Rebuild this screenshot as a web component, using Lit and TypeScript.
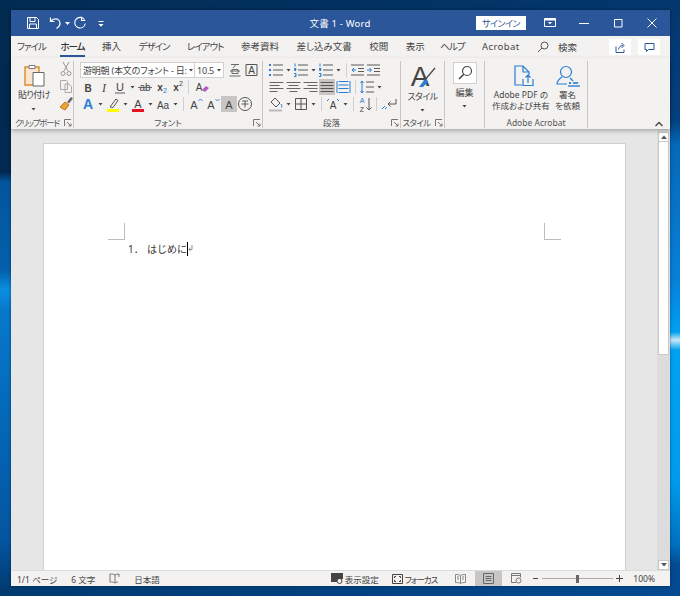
import { LitElement, html, svg, css } from "lit";
import { customElement } from "lit/decorators.js";

const GREY = "#5b5b5b";
const BLUE = "#2b7cd3";

// icon drawn on a 16 unit box, centred in a cell of width w
const ic = (w: number, body: unknown, h = 16) => html`<svg
  width=${w}
  height=${h}
  viewBox="${(16 - w) / 2} ${(16 - h) / 2} ${w} ${h}"
  fill="none"
  stroke=${GREY}
  stroke-width="1"
>${body}</svg>`;

const caret = (w = 9) => ic(w, svg`<path d="M6 7h4l-2 2.5z" fill="#444" stroke="none"/>`);
const sep = () => html`<span class="vsep"></span>`;
const letter = (t: string, cls: string, x = 8, y = 12.5) => svg`<text x=${x} y=${y} class=${cls} text-anchor="middle" stroke="none">${t}</text>`;
const launcher = () => html`<svg class="launch" width="8" height="8" viewBox="0 0 8 8" fill="none" stroke="#777"><path d="M.5 7V.5H7M3 3l4 4M7 4.5V7H4.5"/></svg>`;

const lines = (ys: number[], x1: number[], x2: number[], color = GREY) =>
  ys.map((y, i) => svg`<path d="M${x1[i]} ${y}H${x2[i]}" stroke=${color}/>`);

const alignIcon = (x1: number[], x2: number[]) =>
  ic(17, lines([3.5, 6.5, 9.5, 12.5], x1, x2, "#666"));

const listIcon = (kind: string) => svg`
  ${kind === "bul"
    ? svg`<rect x="1" y="2" width="2" height="2" fill=${BLUE} stroke="none"/><rect x="1" y="7" width="2" height="2" fill=${BLUE} stroke="none"/><rect x="1" y="12" width="2" height="2" fill=${BLUE} stroke="none"/>`
    : svg`<path d="M2 1.5v3M1 6.5h2v1H1.5v1H3M1 11.5h2v3H1M2 13h1" stroke=${BLUE}/>`}
  <path d="M5 3h10M5 8h10M5 13h10"/>`;

const ICONS = {
  save: html`<svg width="14" height="14" viewBox="0 0 14 14" fill="none" stroke="#fff"><path d="M1.5 1.5h9l2 2v9h-11zM4 1.5v4h5v-4M3.5 12.5v-4.500h7v4.500"/></svg>`,
  undo: html`<svg width="13" height="14" viewBox="0 0 13 14" fill="none" stroke="#fff" stroke-width="1.200"><path d="M1.500 1.500v4h4M1.800 5.300C3 3.500 4.500 2.800 6.500 2.800c2.500 0 4.500 2 4.500 4.500 0 2.500-1.500 4-3.500 5.200"/></svg>`,
  redo: html`<svg width="14" height="14" viewBox="0 0 14 14" fill="none" stroke="#fff" stroke-width="1.100"><path d="M8.500 .8v3.700h3.700M11.500 3.800A5.300 5.300 0 1 0 12.300 7.500"/></svg>`,
  qat: html`<svg width="6" height="7" viewBox="0 0 6 7" fill="#fff"><path d="M.5 1h5v1h-5zM.5 4h5L3 6.800z"/></svg>`,
  ribbon: html`<svg width="12" height="10" viewBox="0 0 12 10" fill="none" stroke="#fff"><path d="M.5.5h11v8H.5z"/><path d="M.5 1.500h11" stroke-width="2"/><path d="M4 4h4L6 6.500z" fill="#fff" stroke="none"/></svg>`,
  min: html`<svg width="10" height="10" viewBox="0 0 10 10" stroke="#fff"><path d="M0 5.500h10"/></svg>`,
  max: html`<svg width="10" height="10" viewBox="0 0 10 10" fill="none" stroke="#fff"><path d="M1.500 1.500h7.500v7.500h-7.500z"/></svg>`,
  close: html`<svg width="10" height="10" viewBox="0 0 10 10" stroke="#fff"><path d="M.5.500l9 9M9.500.5l-9 9"/></svg>`,
  search: html`<svg width="12" height="12" viewBox="0 0 12 12" fill="none" stroke="#555"><circle cx="7.500" cy="4.500" r="3.500"/><path d="M5 7l-4 4"/></svg>`,
  share: html`<svg width="11" height="11" viewBox="0 0 11 11" fill="none" stroke="#2b579a"><path d="M1 4.500v6h8v-3M3.500 7.500C4 5 5.500 3.500 8 3.500M6.500 1l2.500 2.500-2.500 2.500"/></svg>`,
  comment: html`<svg width="11" height="11" viewBox="0 0 11 11" fill="none" stroke="#2b579a"><path d="M1 1.500h9v6H4.500L2.500 9.500v-2H1z"/></svg>`,
};

@customElement("app-root")
export class AppRoot extends LitElement {
  static styles = css`
    :host {
      display: block;
      width: 680px;
      height: 596px;
      box-sizing: border-box;
      padding: 10px 10px 10px 11px;
      overflow: hidden;
      /* desktop wallpaper, only the edges show round the window */
      background:
        linear-gradient(90deg, #022b52, #03386f) top / 100% 10px no-repeat,
        linear-gradient(90deg, #023a70, #044a90) bottom / 100% 10px no-repeat,
        linear-gradient(180deg, #02294f 172px, #03559c 182px, #0460ac 270px, #0a8ee0 290px, #0878cc 310px, #0468b8 420px, #0555a0 540px, #023a70 590px) left / 11px 100% no-repeat,
        linear-gradient(180deg, #04366e 0, #04407e 120px, #0668b8 145px, #0880d8 280px, #00a0f0 332px, #c8e8f8 340px, #00a0f0 350px, #009cec 480px, #0070c0 545px, #044a90 565px) right / 10px 100% no-repeat;
      font-family: "Noto Sans", "Noto Sans CJK JP", sans-serif;
      font-feature-settings: "palt";
      font-size: 9.500px;
      color: #444;
    }
    svg { display: block; flex: none; }
    svg text { font-family: "Liberation Sans", sans-serif; fill: #444; }
    svg .b { font-size: 10px; font-weight: 700; }
    svg .i { font-size: 12px; font-style: italic; font-family: "Liberation Serif", serif; }
    svg .n { font-size: 11px; }
    svg .s { font-size: 10px; }
    svg .big { font-size: 14px; font-weight: 700; fill: #2b7cd3; }
    svg .tiny { font-size: 7px; }
    svg .blue { fill: #2b7cd3; }
    svg .stylea { font-size: 28px; }

    .window {
      width: 659px;
      height: 576px;
      display: flex;
      flex-direction: column;
      background: #e6e6e6;
      box-shadow: 0 0 3px rgba(0, 0, 0, .4);
    }

    /* title bar */
    .title {
      height: 26px;
      flex: none;
      background: #2b579a;
      color: #fff;
      display: grid;
      grid-template-columns: 1fr auto 1fr;
      align-items: center;
    }
    .qat, .controls { display: flex; align-items: center; }
    .qat { padding-left: 15px; }
    .qat .undo { margin-left: 9px; }
    .qat .ucaret { margin: 0 0 0 3px; }
    .qat .redo { margin-left: 3px; }
    .qat .custom { margin-left: 11px; }
    .doc-name { font-size: 9.500px; letter-spacing: .2px; padding-right: 1px; }
    .controls { justify-content: flex-end; padding-right: 13px; }
    .signin {
      width: 50px;
      height: 14px;
      background: #fff;
      color: #2b579a;
      font-size: 9px;
      letter-spacing: -.5px;
      display: flex;
      align-items: center;
      justify-content: center;
      margin-right: 18px;
    }
    .controls .ribbon { margin-right: 23px; }
    .controls .min { margin-right: 24px; }
    .controls .max { margin-right: 24px; }

    /* tabs */
    .tabs {
      height: 22px;
      flex: none;
      background: #f3f2f1;
      display: flex;
      align-items: center;
      gap: 17.500px;
      padding: 0 10px 0 6px;
      font-size: 9.500px;
    }
    .tab { position: relative; line-height: 22px; white-space: nowrap; }
    .tab:first-child { margin-right: -3px; }
    .tab.kana { letter-spacing: -1px; }
    .tab.latin { letter-spacing: .4px; }
    .tab.tight { margin-right: -2px; }
    .tab.on { color: #333; font-weight: 500; }
    .tab.on::after {
      content: "";
      position: absolute;
      left: 0;
      right: 0;
      bottom: 1px;
      height: 2px;
      background: #2b579a;
    }
    .find { display: flex; align-items: center; gap: 9px; white-space: nowrap; }
    .tabs .right { margin-left: auto; display: flex; gap: 7px; }
    .tabbtn {
      width: 22px;
      height: 16px;
      background: #fff;
      display: flex;
      align-items: center;
      justify-content: center;
    }

    /* ribbon */
    .ribbon-bar {
      height: 71px;
      flex: none;
      box-sizing: border-box;
      background: #f3f2f1;
      display: flex;
      padding: 3px 0 1px;
      box-shadow: 0 2px 4px rgba(0, 0, 0, .25);
      position: relative;
      z-index: 1;
      font-size: 9px;
    }
    .group {
      box-sizing: border-box;
      border-right: 1px solid #c8c6c4;
      display: flex;
      flex-direction: column;
      position: relative;
    }
    .g-clip { width: 63px; }
    .g-font { width: 189px; }
    .g-para { width: 138px; }
    .g-style { width: 44px; }
    .g-edit { width: 40px; }
    .g-acro { width: 103px; }
    .body { flex: 1; min-height: 0; }
    .label {
      height: 11px;
      line-height: 11px;
      text-align: center;
      font-size: 8.500px;
      color: #555;
      white-space: nowrap;
    }
    .label.kana { letter-spacing: -.6px; }
    .launch { position: absolute; right: 1px; bottom: 1px; }
    .g-clip .label { padding-right: 10px; letter-spacing: -1.200px; }
    .g-style .label { padding-right: 12px; }

    .g-clip .body { display: flex; padding: 0 0 0 7px; }
    .paste { width: 35px; display: flex; flex-direction: column; align-items: center; padding-top: 2px; }
    .paste span { margin-top: 2px; line-height: 12px; letter-spacing: -.6px; white-space: nowrap; }
    .tools { display: flex; flex-direction: column; gap: 1px; margin-left: 8px; }

    .rows { display: flex; flex-direction: column; gap: 1px; }
    .g-font .body { padding: 1px 0 0 6px; }
    .g-para .body { padding: 1px 0 0 5px; }
    .row { display: flex; align-items: center; height: 16px; }
    .vsep { width: 1px; height: 14px; background: #d2d0ce; margin: 0 3px; flex: none; }
    .fontbox {
      box-sizing: border-box;
      width: 115px;
      height: 16px;
      background: #fff;
      border: 1px solid #d2d0ce;
      display: flex;
      align-items: center;
      font-size: 9px;
      padding-left: 2px;
      white-space: nowrap;
      justify-content: space-between;
    }
    .fontbox span { letter-spacing: -.2px; }
    .sizebox { width: 30px; margin-left: -1px; margin-right: 3px; }
    .on-grey { background: #c8c6c4; }

    .large {
      display: flex;
      flex-direction: column;
      align-items: center;
      padding-top: 1px;
      text-align: center;
      line-height: 11px;
    }
    .large .kana { letter-spacing: -.5px; white-space: nowrap; }
    .editbtn {
      width: 24px;
      height: 22px;
      box-sizing: border-box;
      background: #fff;
      border: 1px solid #d2d0ce;
      display: flex;
      align-items: center;
      justify-content: center;
      margin-bottom: 3px;
    }
    .g-acro .body { display: flex; justify-content: space-between; padding: 4px 7px 0 7px; font-size: 8.500px; }
    .acro { display: flex; flex-direction: column; align-items: center; line-height: 11px; text-align: center; gap: 2px; white-space: nowrap; }
    .acro .up { margin-left: 6px; }
    .chev { position: absolute; left: 644px; bottom: 2px; }

    /* document */
    .work { flex: 1; min-height: 0; display: flex; overflow: hidden; }
    .canvas { flex: 1; padding: 14px 0 0 32px; overflow: hidden; }
    .page {
      box-sizing: border-box;
      width: 583px;
      height: 600px;
      background: #fff;
      border: 1px solid #d0d0d0;
      padding: 79px 64px 0;
    }
    .marks { display: flex; justify-content: space-between; }
    .mark { width: 17px; height: 17px; box-sizing: border-box; border-bottom: 1px solid #bdbdbd; }
    .mark.l { border-right: 1px solid #bdbdbd; }
    .mark.r { border-left: 1px solid #bdbdbd; }
    .line {
      display: flex;
      align-items: center;
      height: 13px;
      margin: 2px 0 0 20px;
      font-size: 10px;
      color: #333;
      font-feature-settings: normal;
    }
    .line .num { width: 19px; }
    .cursor { width: 1px; height: 14px; background: #000; }

    .scroll {
      width: 13px;
      background: #dcdcdc;
      display: flex;
      flex-direction: column;
      flex: none;
      box-sizing: border-box;
      padding: 3px 1px 0 1px;
    }
    .sbtn { height: 10px; background: #fff; border: 1px solid #c8c8c8; box-sizing: border-box; display: flex; align-items: center; justify-content: center; flex: none; }
    .thumb { height: 213px; background: #fff; border: 1px solid #c8c8c8; border-top: 0; box-sizing: border-box; flex: none; }
    .track { flex: 1; }

    /* status */
    .status {
      height: 16px;
      flex: none;
      background: #f3f2f1;
      border-top: 1px solid #dcdcdc;
      box-sizing: border-box;
      display: flex;
      align-items: center;
      padding-left: 6px;
      font-size: 8.500px;
      white-space: nowrap;
    }
    .status .wc { margin-left: 14px; }
    .status .ck { margin-left: 14px; }
    .status .jp { margin-left: 13px; }
    .status .view { margin-left: auto; display: flex; align-items: center; gap: 1px; }
    .status .focus { margin-left: 13px; display: flex; align-items: center; gap: 2px; }
    .status .focus span { letter-spacing: -1px; }
    .status .read { margin-left: 18px; }
    .status .print { margin-left: 9px; width: 27px; height: 15px; background: #c8c6c4; display: flex; align-items: center; justify-content: center; }
    .status .web { margin-left: 9px; }
    .zoom { display: flex; align-items: center; margin-left: 10px; }
    .slider { width: 71px; height: 1px; background: #aaa; margin: 0 3px; display: flex; align-items: center; padding-left: 34px; box-sizing: border-box; }
    .slider i { display: block; width: 3px; height: 8px; background: #666; flex: none; }
    .pct { margin: 0 15px 0 10px; }
  `;

  render() {
    return html`<div class="window">
      ${this.titleBar()}
      ${this.tabs()}
      ${this.ribbon()}
      <div class="work">
        <div class="canvas">
          <div class="page">
            <div class="marks"><span class="mark l"></span><span class="mark r"></span></div>
            <div class="line">
              <span class="num">1．</span><span>はじめに</span><span class="cursor"></span>
              <svg width="5" height="7" viewBox="0 0 5 7" fill="none" stroke="#777" stroke-width=".8"><path d="M4 0v4.500H1M2.500 3L.8 4.500 2.500 6"/></svg>
            </div>
          </div>
        </div>
        <div class="scroll">
          <div class="sbtn"><svg width="6" height="4" viewBox="0 0 6 4"><path d="M0 4l3-3.500L6 4z" fill="#555"/></svg></div>
          <div class="thumb"></div>
          <div class="track"></div>
          <div class="sbtn"><svg width="6" height="4" viewBox="0 0 6 4"><path d="M0 0l3 3.500L6 0z" fill="#555"/></svg></div>
        </div>
      </div>
      ${this.status()}
    </div>`;
  }

  titleBar() {
    return html`<div class="title">
      <div class="qat">
        ${ICONS.save}
        <span class="undo">${ICONS.undo}</span>
        <span class="ucaret"><svg width="5" height="3" viewBox="0 0 5 3"><path d="M0 0h5L2.500 3z" fill="#fff"/></svg></span>
        <span class="redo">${ICONS.redo}</span>
        <span class="custom">${ICONS.qat}</span>
      </div>
      <div class="doc-name">文書 1 - Word</div>
      <div class="controls">
        <div class="signin">サインイン</div>
        <span class="ribbon">${ICONS.ribbon}</span>
        <span class="min">${ICONS.min}</span>
        <span class="max">${ICONS.max}</span>
        ${ICONS.close}
      </div>
    </div>`;
  }

  tabs() {
    const names: [string, string][] = [
      ["ファイル", "kana"],
      ["ホーム", "kana on"],
      ["挿入", ""],
      ["デザイン", "kana"],
      ["レイアウト", "kana"],
      ["参考資料", ""],
      ["差し込み文書", ""],
      ["校閲", ""],
      ["表示", "tight"],
      ["ヘルプ", "kana"],
      ["Acrobat", "latin"],
    ];
    return html`<div class="tabs">
      ${names.map(([n, c]) => html`<span class="tab ${c}">${n}</span>`)}
      <span class="find">${ICONS.search}<span>検索</span></span>
      <span class="right">
        <span class="tabbtn">${ICONS.share}</span>
        <span class="tabbtn">${ICONS.comment}</span>
      </span>
    </div>`;
  }

  ribbon() {
    return html`<div class="ribbon-bar">
      ${this.clipGroup()}
      ${this.fontGroup()}
      ${this.paraGroup()}
      <div class="group g-style">
        <div class="body large">
          <svg width="28" height="29" viewBox="0 0 28 29" fill="none">
            <text x="11" y="24" text-anchor="middle" class="stylea">A</text>
            <path d="M26 6L15 19" stroke="#444" stroke-width="1.200"/>
            <path d="M16 17l3 3-5 5-4 0z" fill="#2b7cd3"/>
          </svg>
          <span class="kana">スタイル</span>
          ${caret()}
        </div>
        <div class="label kana">スタイル</div>
        ${launcher()}
      </div>
      <div class="group g-edit">
        <div class="body large">
          <div class="editbtn">
            <svg width="16" height="16" viewBox="0 0 16 16" fill="none" stroke="#444" stroke-width="1.200"><circle cx="10" cy="6" r="4.500"/><path d="M6.800 9.200L2 14" stroke-width="1.600"/></svg>
          </div>
          <span>編集</span>
          ${caret()}
        </div>
      </div>
      <div class="group g-acro">
        <div class="body">
          <div class="acro">
            <svg class="up" width="22" height="22" viewBox="0 0 22 22" fill="none" stroke=${BLUE} stroke-width="1.200"><path d="M9 20H2V1h8l6 6v3M10 1v6h6"/><path d="M10 14v6.500h10V14M15 18V10M12.500 12.500L15 10l2.500 2.500"/></svg>
            <span>Adobe PDF の<br />作成および共有</span>
          </div>
          <div class="acro">
            <svg width="24" height="22" viewBox="0 0 24 22" fill="none" stroke=${BLUE} stroke-width="1.200"><circle cx="10" cy="7" r="5.500"/><path d="M6 12C3 14 1 16 1 19h10"/><path d="M14 13c1 1 2 2 3 3"/><path d="M13 17l2 2M15 17l-2 2M17 19l1-2 1 2 1-2 1 2 1-2" stroke-width="1"/><path d="M12 21h12" stroke-width="1.400"/></svg>
            <span>署名<br />を依頼</span>
          </div>
        </div>
        <div class="label">Adobe Acrobat</div>
      </div>
      <svg class="chev" width="8" height="6" viewBox="0 0 8 6" fill="none" stroke="#444" stroke-width="1.300"><path d="M.5 5L4 1.500 7.500 5"/></svg>
    </div>`;
  }

  clipGroup() {
    return html`<div class="group g-clip">
      <div class="body">
        <div class="paste">
          <svg width="24" height="24" viewBox="0 0 24 24" fill="none">
            <path d="M3 4h14v18H3z" fill="#f8e6cf" stroke="#e0892b" stroke-width="1.400"/>
            <path d="M7 2.500h6v3H7z" fill="#fff" stroke="#777"/>
            <path d="M11 9.500h11V23H11z" fill="#fff" stroke="#666"/>
          </svg>
          <span>貼り付け</span>
          ${caret()}
        </div>
        <div class="tools">
          ${ic(16, svg`<path d="M5 1l5 9M11 1L6 10" stroke="#999"/><circle cx="5" cy="12.500" r="2" stroke="#999"/><circle cx="11" cy="12.500" r="2" stroke="#999"/>`)}
          ${ic(16, svg`<path d="M2.500 2.500h6l1 1v8h-7zM7 6h4l2.500 2.500v6H7z" stroke="#aaa" fill="#f3f2f1"/>`)}
          ${ic(16, svg`<path d="M9 7l4-5 2 1.500-4 5" fill="#666" stroke="none"/><path d="M2 12l5-5 4 3-4 5z" fill="#e8a33d" stroke="#c96f1a"/>`)}
        </div>
      </div>
      <div class="label kana">クリップボード</div>
      ${launcher()}
    </div>`;
  }

  fontGroup() {
    return html`<div class="group g-font">
      <div class="body rows">
        <div class="row">
          <div class="fontbox"><span>游明朝 (本文のフォント - 日:</span>${caret(8)}</div>
          <div class="fontbox sizebox"><span>10.5</span>${caret(8)}</div>
          ${ic(16, svg`<path d="M4 2.500h8M9 2.500L6 6M3 9h10M5 7.500h6v4H5zM2.500 14h11" stroke-width=".9"/>`)}
          ${ic(17, svg`<path d="M2.500 2.500h11v11h-11z" stroke="#555"/>${letter("A", "s", 8, 12)}`)}
        </div>
        <div class="row">
          ${ic(16, letter("B", "b"))}
          ${ic(16, letter("I", "i"))}
          ${ic(16, svg`${letter("U", "n", 8, 11.5)}<path d="M3 14h10"/>`)}
          ${caret()}
          ${ic(16, svg`${letter("ab", "s", 8, 12)}<path d="M1 8.500h14" stroke-width=".9"/>`)}
          ${ic(16, svg`${letter("x", "b", 7, 12)}<text x="10" y="14" class="tiny blue" stroke="none">2</text>`)}
          ${ic(16, svg`${letter("x", "b", 7, 12)}<text x="10" y="7" class="tiny" stroke="none">2</text>`)}
          ${sep()}
          ${ic(18, svg`${letter("A", "s", 6, 12)}<path d="M9 11l4-4 3 2-4 4z" fill="#b45cc4" stroke="none"/>`)}
        </div>
        <div class="row">
          ${ic(16, letter("A", "big"))}
          ${caret()}
          ${ic(16, svg`<path d="M5 11l6-8 2 1.500-5 7z" stroke="#555"/><rect x="2" y="13" width="12" height="3" fill="#ffff00" stroke="none"/>`)}
          ${caret()}
          ${ic(16, svg`${letter("A", "n", 8, 11.5)}<rect x="2" y="13" width="12" height="3" fill="#e81123" stroke="none"/>`)}
          ${caret()}
          ${ic(16, letter("Aa", "s"))}
          ${caret()}
          ${sep()}
          ${ic(17, svg`${letter("A", "n", 6.5)}<path d="M11 5l2-2 2 2" stroke=${BLUE} stroke-width=".9"/>`)}
          ${ic(17, svg`${letter("A", "n", 6.5)}<path d="M11 3l2 2 2-2" stroke=${BLUE} stroke-width=".9"/>`)}
          <span class="on-grey">${ic(16, letter("A", "n"))}</span>
          ${ic(16, svg`<circle cx="8" cy="8" r="6.500" stroke="#555"/><path d="M5 5h6M8 5v6.500M4.500 8h7"/>`)}
        </div>
      </div>
      <div class="label">フォント</div>
      ${launcher()}
    </div>`;
  }

  paraGroup() {
    return html`<div class="group g-para">
      <div class="body rows">
        <div class="row">
          ${ic(16, listIcon("bul"))}
          ${caret()}
          ${ic(16, listIcon("num"))}
          ${caret()}
          ${ic(16, listIcon("num"))}
          ${caret()}
          ${sep()}
          ${ic(16, svg`<path d="M1 3h13M8 6.500h6M8 9.500h6M1 13h13"/><path d="M6 8H2M4 6L2 8l2 2" stroke=${BLUE}/>`)}
          ${ic(16, svg`<path d="M1 3h13M8 6.500h6M8 9.500h6M1 13h13"/><path d="M1 8h4M3.500 6L5.500 8l-2 2" stroke=${BLUE}/>`)}
        </div>
        <div class="row">
          ${alignIcon([1, 1, 1, 1], [15, 11, 15, 9])}
          ${alignIcon([1, 3, 1, 4], [15, 13, 15, 12])}
          ${alignIcon([1, 5, 1, 7], [15, 15, 15, 15])}
          <span class="on-grey">${ic(16, lines([3.5, 6.5, 9.5, 12.5], [1.5, 1.5, 1.5, 1.5], [14.5, 14.5, 14.5, 14.5], "#555"))}</span>
          ${ic(17, svg`<path d="M1.500 2v12M14.500 2v12M3 2.500h10M3 6h10M3 9.500h10M3 13.500h10" stroke=${BLUE}/>`)}
          ${sep()}
          ${ic(16, svg`<path d="M7 3h8M7 8h8M7 13h8"/><path d="M3 2v12M1.500 4L3 2l1.500 2M1.500 12L3 14l1.500-2" stroke=${BLUE}/>`)}
          ${caret()}
        </div>
        <div class="row">
          ${ic(16, svg`<path d="M7 2l5 5-4 4-5-5z" stroke="#555"/><path d="M13 8c1 2 1.500 3 0 3.500" stroke=${BLUE}/><path d="M1 14.500h13" stroke="#bbb" stroke-width="2"/>`)}
          ${caret()}
          ${ic(16, svg`<path d="M2.500 2.500h11v11h-11zM8 2.500v11M2.500 8h11" stroke="#555"/>`)}
          ${caret()}
          ${sep()}
          ${ic(16, svg`${letter("A", "s", 8, 13)}<path d="M2 5l2-2M14 5l-2-2" stroke=${BLUE}/>`)}
          ${caret()}
          ${sep()}
          ${ic(16, svg`<text x="5" y="7" class="tiny blue" text-anchor="middle" stroke="none">A</text><text x="5" y="15.500" class="tiny" text-anchor="middle" stroke="none">Z</text><path d="M12 2v12M9.500 11.500L12 14l2.500-2.500"/>`)}
          ${sep()}
          ${ic(18, svg`<path d="M15 3v5H7M9.500 5.500L7 8l2.500 2.500" stroke="#555"/><path d="M1 13l3-3M4 13l2-2" stroke=${BLUE}/>`)}
        </div>
      </div>
      <div class="label">段落</div>
      ${launcher()}
    </div>`;
  }

  status() {
    return html`<div class="status">
      <span>1/1 ページ</span>
      <span class="wc">6 文字</span>
      <span class="ck"><svg width="12" height="11" viewBox="0 0 12 11" fill="none" stroke="#777"><path d="M6 2C4.500 1 3 1 1 1v8c2 0 3.500 0 5 1 1-.7 2-1 3-1M6 2c1-.8 2.500-1 4-1v3M6 2v8"/></svg></span>
      <span class="jp">日本語</span>
      <span class="view">
        <svg width="13" height="11" viewBox="0 0 13 11"><path d="M0 0h12v6H6v3H0z" fill="#444"/><circle cx="8.500" cy="8" r="2.500" fill="none" stroke="#444"/></svg>
        <span>表示設定</span>
      </span>
      <span class="focus">
        <svg width="11" height="10" viewBox="0 0 11 10" fill="none" stroke="#444"><path d="M.5.5h10v9H.5z"/><path d="M2.500 4V2.500H4M7 2.500h1.500V4M8.500 6v1.500H7M4 7.500H2.500V6"/></svg>
        <span>フォーカス</span>
      </span>
      <span class="read"><svg width="11" height="10" viewBox="0 0 11 10" fill="none" stroke="#888"><path d="M5.500 1.500C4 .5 2.500.5.500.5v8c2 0 3.500 0 5 1 1.500-1 3-1 5-1v-8c-2 0-3.500 0-5 1zM5.500 1.500v8M2 3h2M2 5h2M7 3h2M7 5h2"/></svg></span>
      <span class="print"><svg width="11" height="11" viewBox="0 0 11 11" fill="none" stroke="#666"><path d="M.5.5h10v10H.5zM2.500 3.500h6M2.500 5.500h6M2.500 7.500h6"/></svg></span>
      <span class="web"><svg width="11" height="11" viewBox="0 0 11 11" fill="none" stroke="#777"><path d="M5 9.500H.5V.5h9v4M.5 2.500h9"/><circle cx="7.500" cy="7.500" r="2.500"/></svg></span>
      <span class="zoom">
        <svg width="7" height="7" viewBox="0 0 7 7" stroke="#444"><path d="M1 3.500h5"/></svg>
        <span class="slider"><i></i></span>
        <svg width="7" height="7" viewBox="0 0 7 7" stroke="#444"><path d="M0 3.500h7M3.500 0v7"/></svg>
      </span>
      <span class="pct">100%</span>
    </div>`;
  }
}
